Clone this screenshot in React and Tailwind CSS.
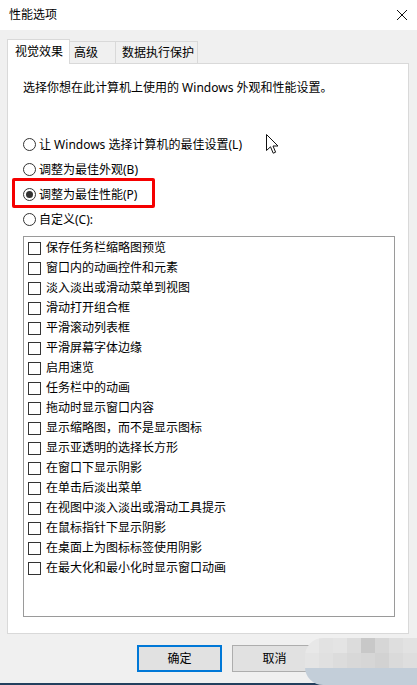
import { useState } from "react";

const items = [
  "保存任务栏缩略图预览",
  "窗口内的动画控件和元素",
  "淡入淡出或滑动菜单到视图",
  "滑动打开组合框",
  "平滑滚动列表框",
  "平滑屏幕字体边缘",
  "启用速览",
  "任务栏中的动画",
  "拖动时显示窗口内容",
  "显示缩略图，而不是显示图标",
  "显示亚透明的选择长方形",
  "在窗口下显示阴影",
  "在单击后淡出菜单",
  "在视图中淡入淡出或滑动工具提示",
  "在鼠标指针下显示阴影",
  "在桌面上为图标标签使用阴影",
  "在最大化和最小化时显示窗口动画",
];

const radios = [
  "让 Windows 选择计算机的最佳设置(L)",
  "调整为最佳外观(B)",
  "调整为最佳性能(P)",
  "自定义(C):",
];

function Radio({ checked }) {
  return (
    <span className="w-[13px] h-[13px] rounded-full border border-[#333] bg-white flex items-center justify-center shrink-0">
      {checked && <span className="w-[7px] h-[7px] rounded-full bg-[#333]" />}
    </span>
  );
}

export default function App() {
  const [mode, setMode] = useState(2);
  const [checks, setChecks] = useState(items.map(() => false));

  const toggle = (i) => {
    const next = [...checks];
    next[i] = !next[i];
    setChecks(next);
  };

  return (
    <div
      className="relative w-[417px] h-[685px] bg-[#f0f0f0] text-[12px] text-black overflow-hidden flex flex-col"
      style={{ fontFamily: '"Noto Sans", "Noto Sans CJK SC", sans-serif' }}
    >
      {/* title bar */}
      <div className="h-[30px] bg-white flex items-center justify-between pl-[9px] pr-[8px] shrink-0">
        <span className="text-[12px] leading-none">性能选项</span>
        <svg width="12" height="12" viewBox="0 0 12 12" className="mr-[1px]">
          <path d="M1 1 L11 11 M11 1 L1 11" stroke="#111" strokeWidth="1" />
        </svg>
      </div>

      {/* tabs */}
      <div className="flex items-end h-[33px] pl-[7px] shrink-0">
        <div className="relative z-10 h-[25px] w-[63px] bg-white border border-b-0 border-[#d9d9d9] -mb-px flex items-center pl-[7px] leading-none">
          视觉效果
        </div>
        <div className="h-[22px] w-[46px] border border-b-0 border-l-0 border-[#d9d9d9] flex items-center pl-[4px] leading-none">
          高级
        </div>
        <div className="h-[22px] w-[82px] border border-b-0 border-l-0 border-[#d9d9d9] flex items-center pl-[6px] leading-none">
          数据执行保护
        </div>
      </div>

      {/* panel */}
      <div className="ml-[7px] w-[402px] h-[571px] bg-white border border-[#d9d9d9] flex flex-col px-[15px] pt-[16px] pb-[16px] shrink-0">
        <div className="leading-[16px]">选择你想在此计算机上使用的 Windows 外观和性能设置。</div>
        <div className="mt-[36px] flex flex-col">
          {radios.map((r, i) => (
            <label
              key={r}
              onClick={() => setMode(i)}
              className="h-[25px] flex items-center gap-[3px] leading-none cursor-default"
            >
              <Radio checked={mode === i} />
              <span>{r}</span>
            </label>
          ))}
        </div>
        <div className="mt-[4px] flex-1 border border-[#9a9a9a] mr-[-2px] pt-[1px] pl-[4px] flex flex-col">
          {items.map((t, i) => (
            <div
              key={t}
              onClick={() => toggle(i)}
              className="h-[20px] flex items-center gap-[5px] leading-none"
            >
              <span className="w-[13px] h-[13px] border border-[#333] bg-white shrink-0 flex items-center justify-center">
                {checks[i] && (
                  <svg width="9" height="9" viewBox="0 0 9 9">
                    <path d="M1 4.5 L3.5 7 L8 1.5" stroke="#333" strokeWidth="1.3" fill="none" />
                  </svg>
                )}
              </span>
              <span>{t}</span>
            </div>
          ))}
        </div>
      </div>

      {/* buttons */}
      <div className="flex gap-[10px] pl-[137px] mt-[11px]">
        <button className="w-[85px] h-[27px] bg-[#e1e1e1] border-2 border-[#0078d7] leading-none">确定</button>
        <button className="w-[85px] h-[27px] bg-[#e1e1e1] border border-[#adadad] leading-none">取消</button>
        <button className="w-[85px] h-[27px] bg-[#e1e1e1] border border-[#adadad] leading-none">应用(A)</button>
      </div>

      <div className="absolute left-0 right-0 bottom-0 h-[2px] bg-[#23405e]" />

      {/* red annotation */}
      <div className="absolute left-[12px] top-[178px] w-[143px] h-[30px] border-[3px] border-[#f50000] rounded-[2px] pointer-events-none" />

      {/* mouse cursor */}
      <svg className="absolute left-[266px] top-[134px]" width="13" height="21" viewBox="0 0 13 21">
        <path
          d="M0.5 0.5 L0.5 16.5 L4.5 12.8 L7.2 19.2 L9.6 18.2 L7 12 L12 12 Z"
          fill="white"
          stroke="#111"
          strokeWidth="1"
          strokeLinejoin="round"
        />
      </svg>

      {/* blurred watermark */}
      <div className="absolute left-[305px] top-[638px] w-[112px] h-[47px] rounded-l-[18px] overflow-hidden flex flex-col">
        <div className="flex h-[15px]">
          <div className="flex-1 bg-[#e8e8e8]" />
          <div className="flex-1 bg-[#e2e2e2]" />
          <div className="flex-1 bg-[#e4e4e4]" />
          <div className="flex-1 bg-[#dcdcdc]" />
          <div className="flex-1 bg-[#c8c8c8]" />
          <div className="flex-1 bg-[#d6d6d6]" />
          <div className="flex-1 bg-[#dedede]" />
          <div className="flex-1 bg-[#e2e2e2]" />
        </div>
        <div className="flex h-[15px]">
          <div className="flex-1 bg-[#e4e4e4]" />
          <div className="flex-1 bg-[#e0e0e0]" />
          <div className="flex-1 bg-[#dcdcdc]" />
          <div className="flex-1 bg-[#d8d8d8]" />
          <div className="flex-1 bg-[#d6d6d6]" />
          <div className="flex-1 bg-[#d2d2d2]" />
          <div className="flex-1 bg-[#dadada]" />
          <div className="flex-1 bg-[#dedede]" />
        </div>
        <div className="flex-1 bg-[#c3ced9]" />
      </div>
    </div>
  );
}
